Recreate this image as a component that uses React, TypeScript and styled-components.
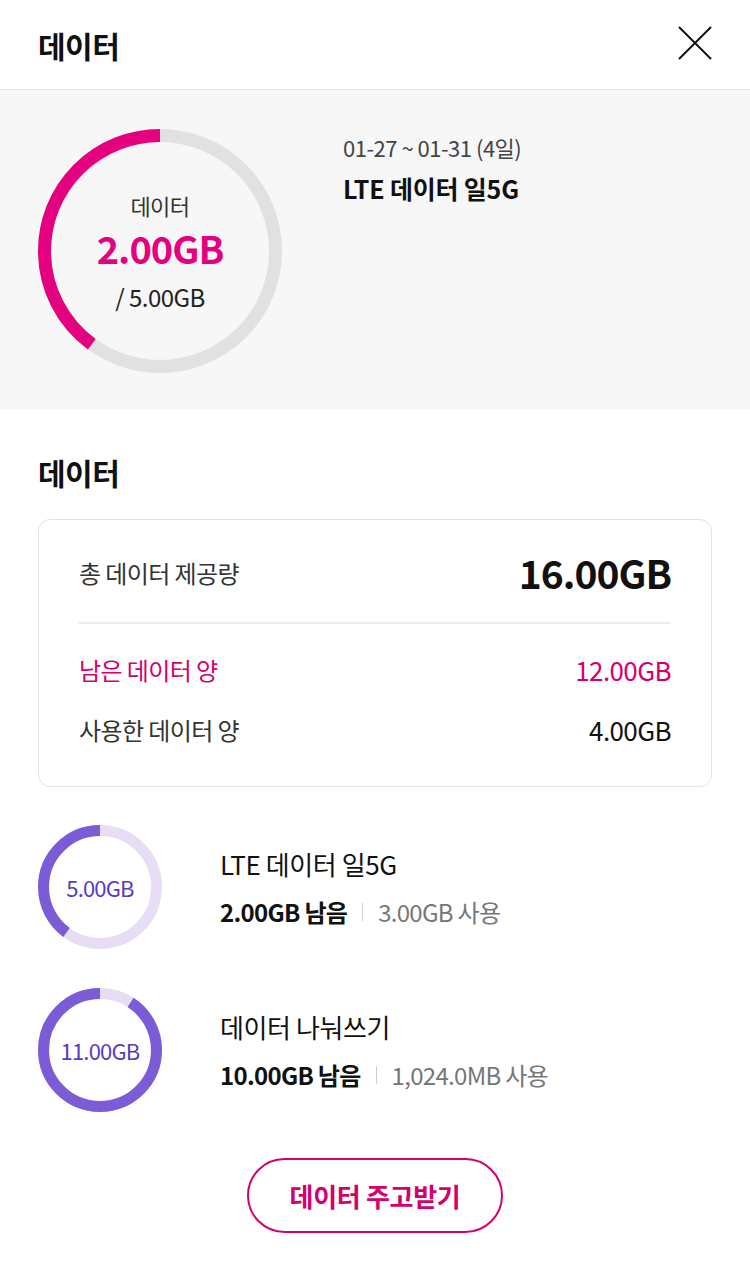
import React from "react";
import styled, { createGlobalStyle } from "styled-components";

const PINK = "#e4007f";
const PINK_TEXT = "#d4006b";
const PURPLE = "#7c5cd6";
const PURPLE_LIGHT = "#e7def6";
const PURPLE_TEXT = "#5a3bbf";

const GlobalStyle = createGlobalStyle`
  html, body {
    margin: 0;
    padding: 0;
    background: #ffffff;
  }
  body {
    font-family: "Noto Sans CJK KR", "Noto Sans", sans-serif;
    color: #111;
    -webkit-font-smoothing: antialiased;
  }
  * { box-sizing: border-box; }
`;

const Page = styled.div`
  width: 750px;
  min-height: 1266px;
  background: #fff;
`;

const Header = styled.header`
  height: 90px;
  padding: 0 38px;
  display: flex;
  align-items: center;
  justify-content: space-between;
  border-bottom: 1px solid #e4e4e4;
`;

const HeaderTitle = styled.h1`
  margin: 0;
  font-size: 30px;
  font-weight: 700;
  letter-spacing: -0.5px;
  color: #111;
  line-height: 40px;
`;

const CloseButton = styled.button`
  width: 36px;
  height: 36px;
  margin-right: -1px;
  margin-top: -3px;
  padding: 0;
  border: 0;
  background: transparent;
  display: flex;
  align-items: center;
  justify-content: center;
`;

const Summary = styled.section`
  height: 320px;
  background: #f7f7f7;
  padding: 39px 38px 0;
  display: flex;
  gap: 61px;
`;

const DonutWrap = styled.div<{ $size: number }>`
  width: ${(p) => p.$size}px;
  height: ${(p) => p.$size}px;
  flex: none;
  display: grid;
  place-items: center;
  & > * {
    grid-area: 1 / 1;
  }
`;

const DonutCenter = styled.div`
  display: flex;
  flex-direction: column;
  align-items: center;
  text-align: center;
`;

const BigLabel = styled.div`
  font-size: 22px;
  line-height: 28px;
  color: #333;
  letter-spacing: -0.5px;
`;

const BigValue = styled.div`
  margin-top: 7px;
  font-size: 38px;
  line-height: 44px;
  font-weight: 700;
  color: ${PINK};
  letter-spacing: -1px;
`;

const BigTotal = styled.div`
  margin-top: 12px;
  font-size: 24px;
  line-height: 30px;
  color: #222;
  letter-spacing: -0.5px;
`;

const SummaryInfo = styled.div`
  padding-top: 3px;
  display: flex;
  flex-direction: column;
  gap: 8px;
`;

const Period = styled.div`
  font-size: 22px;
  line-height: 31px;
  color: #444;
  letter-spacing: -0.5px;
`;

const PlanName = styled.div`
  font-size: 25px;
  line-height: 34px;
  font-weight: 700;
  color: #111;
  letter-spacing: -0.2px;
`;

const Section = styled.section`
  padding: 42px 38px 0;
`;

const SectionTitle = styled.h2`
  margin: 0;
  font-size: 30px;
  line-height: 40px;
  font-weight: 700;
  color: #111;
  letter-spacing: -0.5px;
`;

const Card = styled.div`
  margin-top: 27px;
  height: 268px;
  border: 1px solid #e3e3e3;
  border-radius: 12px;
  padding: 24px 40px 0;
  display: flex;
  flex-direction: column;
`;

const Row = styled.div<{ $height: number; $gap?: number }>`
  height: ${(p) => p.$height}px;
  margin-top: ${(p) => p.$gap ?? 0}px;
  display: flex;
  align-items: center;
  justify-content: space-between;
`;

const RowLabel = styled.span<{ $accent?: boolean }>`
  font-size: 24px;
  color: ${(p) => (p.$accent ? PINK_TEXT : "#333")};
  letter-spacing: -0.6px;
`;

const RowValue = styled.span<{ $accent?: boolean; $big?: boolean }>`
  font-size: ${(p) => (p.$big ? 39 : 26)}px;
  font-weight: ${(p) => (p.$big ? 700 : 400)};
  color: ${(p) => (p.$accent ? PINK_TEXT : "#111")};
  letter-spacing: ${(p) => (p.$big ? -1 : -0.6)}px;
`;

const Divider = styled.hr`
  margin: 22px 0 0;
  border: 0;
  height: 2px;
  background: #ececec;
`;

const List = styled.div`
  margin-top: 38px;
  display: flex;
  flex-direction: column;
  gap: 39px;
`;

const Item = styled.div`
  display: flex;
  align-items: center;
  gap: 58px;
`;

const SmallValue = styled.div`
  font-size: 22px;
  color: ${PURPLE_TEXT};
  letter-spacing: -0.8px;
`;

const ItemText = styled.div`
  display: flex;
  flex-direction: column;
  gap: 15px;
`;

const ItemTitle = styled.div`
  font-size: 26px;
  line-height: 34px;
  color: #111;
  letter-spacing: -0.4px;
`;

const ItemMeta = styled.div`
  display: flex;
  align-items: center;
  height: 32px;
  font-size: 24px;
  letter-spacing: -0.7px;
`;

const Remain = styled.span`
  font-weight: 700;
  color: #111;
`;

const Sep = styled.span`
  width: 1px;
  height: 18px;
  background: #cfcfcf;
  margin: 0 15px;
`;

const Used = styled.span`
  color: #777;
`;

const ButtonRow = styled.div`
  margin-top: 46px;
  display: flex;
  justify-content: center;
`;

const ShareButton = styled.button`
  width: 256px;
  height: 75px;
  border: 2px solid ${PINK_TEXT};
  border-radius: 38px;
  background: #fff;
  color: ${PINK_TEXT};
  font-family: inherit;
  font-size: 26px;
  font-weight: 700;
  letter-spacing: -0.3px;
  padding: 0;
`;

type DonutProps = {
  size: number;
  stroke: number;
  fraction: number;
  color: string;
  track: string;
  children?: React.ReactNode;
};

function Donut({ size, stroke, fraction, color, track, children }: DonutProps) {
  const c = size / 2;
  const r = c - stroke / 2;
  const circ = 2 * Math.PI * r;
  return (
    <DonutWrap $size={size}>
      <svg width={size} height={size} viewBox={`0 0 ${size} ${size}`}>
        <g transform={`rotate(-90 ${c} ${c})`}>
          <circle cx={c} cy={c} r={r} fill="none" stroke={track} strokeWidth={stroke} />
          <circle
            cx={c}
            cy={c}
            r={r}
            fill="none"
            stroke={color}
            strokeWidth={stroke}
            strokeDasharray={`${fraction * circ} ${circ}`}
            strokeDashoffset={-(1 - fraction) * circ}
          />
        </g>
      </svg>
      {children}
    </DonutWrap>
  );
}

export default function App() {
  return (
    <Page>
      <GlobalStyle />
      <Header>
        <HeaderTitle>데이터</HeaderTitle>
        <CloseButton aria-label="닫기">
          <svg width="34" height="34" viewBox="0 0 34 34">
            <path d="M1 1 L33 33 M33 1 L1 33" stroke="#111" strokeWidth="2" fill="none" />
          </svg>
        </CloseButton>
      </Header>

      <Summary>
        <Donut size={244} stroke={13} fraction={0.4} color={PINK} track="#e1e1e1">
          <DonutCenter>
            <BigLabel>데이터</BigLabel>
            <BigValue>2.00GB</BigValue>
            <BigTotal>/ 5.00GB</BigTotal>
          </DonutCenter>
        </Donut>
        <SummaryInfo>
          <Period>01-27 ~ 01-31 (4일)</Period>
          <PlanName>LTE 데이터 일5G</PlanName>
        </SummaryInfo>
      </Summary>

      <Section>
        <SectionTitle>데이터</SectionTitle>
        <Card>
          <Row $height={56}>
            <RowLabel>총 데이터 제공량</RowLabel>
            <RowValue $big>16.00GB</RowValue>
          </Row>
          <Divider />
          <Row $height={40} $gap={25}>
            <RowLabel $accent>남은 데이터 양</RowLabel>
            <RowValue $accent>12.00GB</RowValue>
          </Row>
          <Row $height={40} $gap={20}>
            <RowLabel>사용한 데이터 양</RowLabel>
            <RowValue>4.00GB</RowValue>
          </Row>
        </Card>

        <List>
          <Item>
            <Donut size={124} stroke={11} fraction={0.4} color={PURPLE} track={PURPLE_LIGHT}>
              <SmallValue>5.00GB</SmallValue>
            </Donut>
            <ItemText>
              <ItemTitle>LTE 데이터 일5G</ItemTitle>
              <ItemMeta>
                <Remain>2.00GB 남음</Remain>
                <Sep />
                <Used>3.00GB 사용</Used>
              </ItemMeta>
            </ItemText>
          </Item>
          <Item>
            <Donut size={124} stroke={11} fraction={10 / 11} color={PURPLE} track={PURPLE_LIGHT}>
              <SmallValue>11.00GB</SmallValue>
            </Donut>
            <ItemText>
              <ItemTitle>데이터 나눠쓰기</ItemTitle>
              <ItemMeta>
                <Remain>10.00GB 남음</Remain>
                <Sep />
                <Used>1,024.0MB 사용</Used>
              </ItemMeta>
            </ItemText>
          </Item>
        </List>

        <ButtonRow>
          <ShareButton>데이터 주고받기</ShareButton>
        </ButtonRow>
      </Section>
    </Page>
  );
}
